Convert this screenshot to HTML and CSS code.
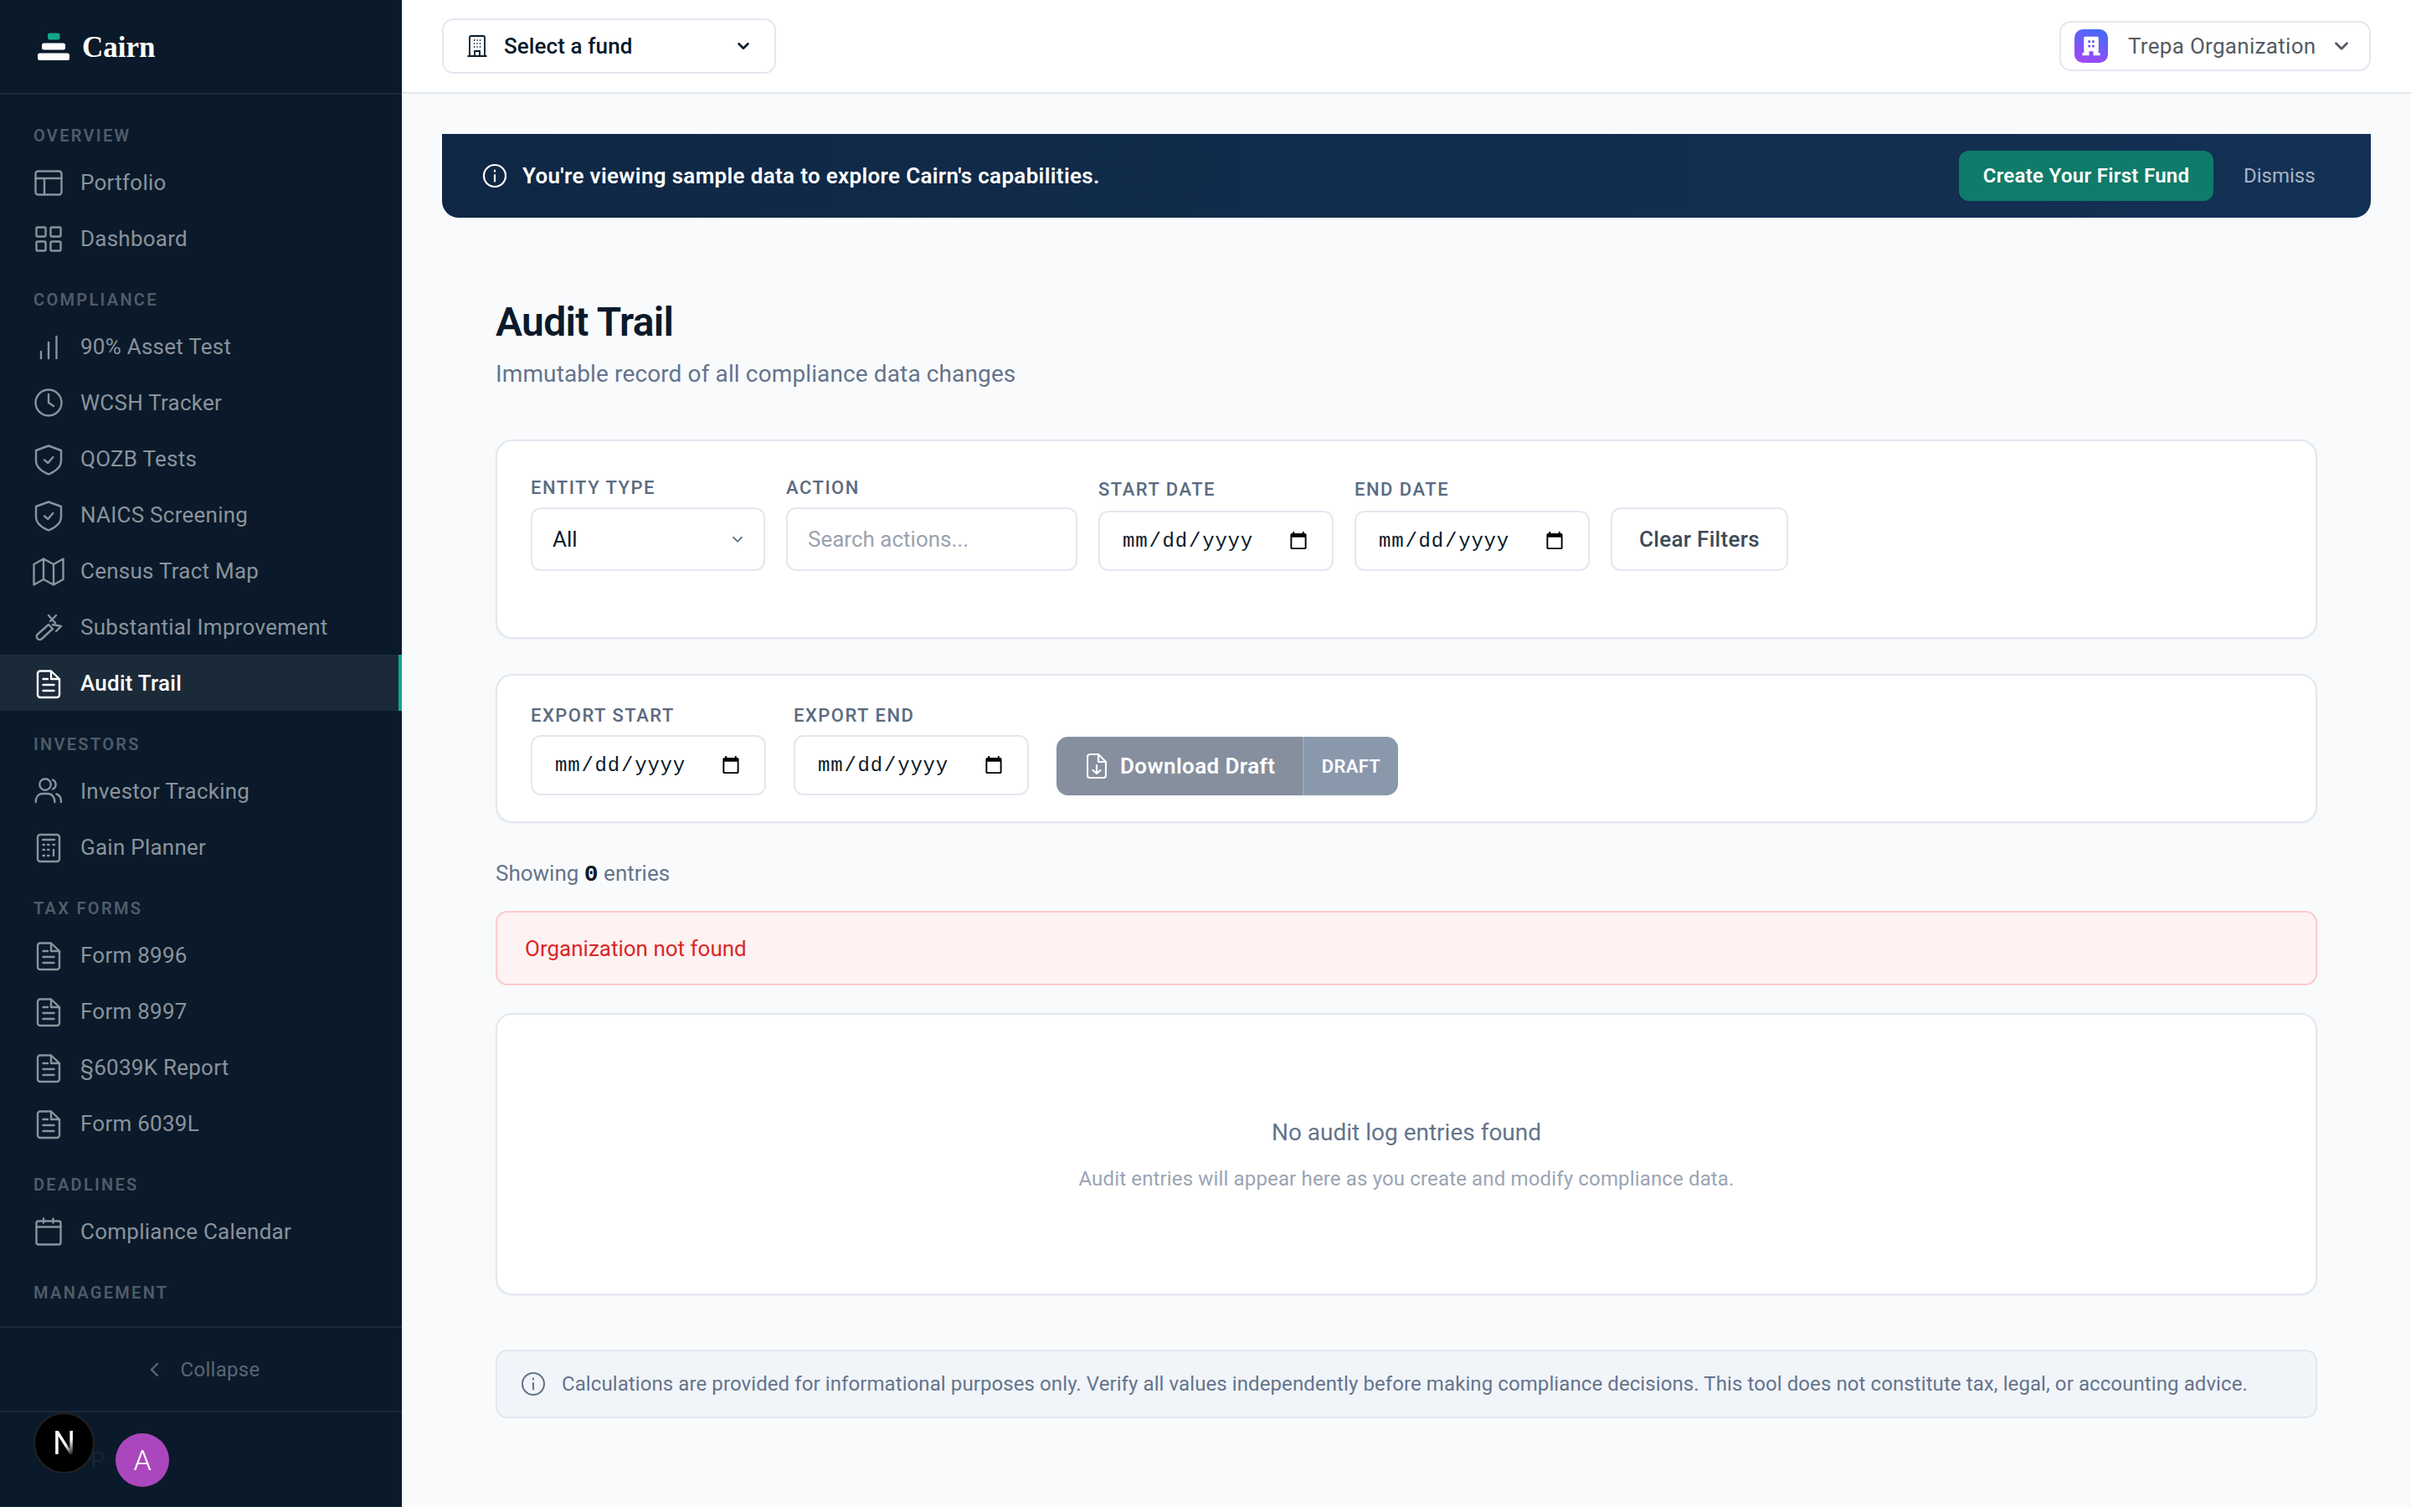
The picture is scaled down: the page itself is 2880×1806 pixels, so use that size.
FILE: index.html
```html
<!DOCTYPE html>
<html lang="en">
<head>
<meta charset="utf-8">
<title>Audit Trail</title>
<link rel="stylesheet" href="styles.css">
</head>
<body>
<svg class="defs" aria-hidden="true">
  <symbol id="i-portfolio" viewBox="0 0 40 40"><rect x="4.5" y="6.5" width="31" height="28" rx="3"/><path d="M4.5 15h31M15 15v19.500"/></symbol>
  <symbol id="i-dash" viewBox="0 0 40 40"><rect x="5.500" y="6.500" width="11" height="11" rx="1.500"/><rect x="22.500" y="6.500" width="12" height="11" rx="1.500"/><rect x="5.500" y="23.500" width="11" height="11" rx="1.500"/><rect x="22.500" y="23.500" width="12" height="11" rx="1.500"/></symbol>
  <symbol id="i-bars" viewBox="0 0 40 40"><path d="M11 34v-8M20 34V15M29.500 34V8"/></symbol>
  <symbol id="i-clock" viewBox="0 0 40 40"><circle cx="20" cy="20" r="15.500"/><path d="M20 10v10l6 4"/></symbol>
  <symbol id="i-shield" viewBox="0 0 40 40"><path d="M20 4.500 35 10v12c0 8-6.500 13-15 16.500C11.500 35 5 30 5 22V10Z"/><path d="m15 21.300 4.300 3.700 6-7"/></symbol>
  <symbol id="i-map" viewBox="0 0 40 40"><path d="M2.500 12 14 5.500 26 12l11.500-6.500V30L26 36.500 14 30 2.500 36.500ZM14 5.500V30M26 12v24.500"/></symbol>
  <symbol id="i-hammer" viewBox="0 0 40 40"><path d="M7 28.500 20 17l5 5-13 12a3.300 3.300 0 0 1-5-5.500ZM20 6l8 9M29 6l-7 7M25 17l10 2-6 6"/></symbol>
  <symbol id="i-doc" viewBox="0 0 40 40"><path d="M10 5.500h13L33 15v19a3 3 0 0 1-3 3H10a3 3 0 0 1-3-3V8.500a3 3 0 0 1 3-3ZM23 5.500V15h10M13.500 15H19M13.500 22h13M13.500 29h13"/></symbol>
  <symbol id="i-users" viewBox="0 0 40 40"><circle cx="16" cy="12" r="6.700"/><path d="M4.700 33c0-6 3.300-10 8.300-10h6c5 0 8.400 4 8.400 10M25 6.500a6 6 0 0 1 0 11M29.500 23.500c3.500 1 5.500 4.500 5.500 9.500"/></symbol>
  <symbol id="i-calc" viewBox="0 0 40 40"><rect x="7" y="5" width="26" height="32" rx="3"/><path d="M13 11h14M13.500 17h1.500M19 17h1.500M25.500 17h1.500M13.500 23h1.500M19 23h1.500M13.500 30h1.500M19 30h1.500M26 23v7"/></symbol>
  <symbol id="i-cal" viewBox="0 0 40 40"><rect x="5.500" y="7.500" width="29" height="28" rx="2.500"/><path d="M5.500 14.500h29M14 4.500v5M25.500 4.500v5"/></symbol>
  <symbol id="i-info" viewBox="0 0 30 30"><circle cx="15" cy="15" r="13"/><path d="M15 14v7.500M15 8.500v1.200"/></symbol>
  <symbol id="i-chev" viewBox="0 0 24 24"><path d="m6 9 6 6 6-6"/></symbol>
</svg>
<div class="app">
  <aside class="sidebar">
    <div class="brand">
      <svg class="brand-mark" viewBox="0 0 38 32"><rect class="mark-green" x="12" y="0" width="14.500" height="8" rx="2.500"/><rect class="mark-white" x="5" y="12" width="28" height="8" rx="2.500"/><rect class="mark-white" x="0" y="24" width="38" height="8.500" rx="2.500"/></svg>
      <span class="brand-name">Cairn</span>
    </div>
    <nav class="nav">
      <div class="nav-label">OVERVIEW</div>
      <a class="nav-item"><svg class="nav-icon"><use href="#i-portfolio"/></svg>Portfolio</a>
      <a class="nav-item"><svg class="nav-icon"><use href="#i-dash"/></svg>Dashboard</a>
      <div class="nav-label nav-gap">COMPLIANCE</div>
      <a class="nav-item"><svg class="nav-icon"><use href="#i-bars"/></svg>90% Asset Test</a>
      <a class="nav-item"><svg class="nav-icon"><use href="#i-clock"/></svg>WCSH Tracker</a>
      <a class="nav-item"><svg class="nav-icon"><use href="#i-shield"/></svg>QOZB Tests</a>
      <a class="nav-item"><svg class="nav-icon"><use href="#i-shield"/></svg>NAICS Screening</a>
      <a class="nav-item"><svg class="nav-icon"><use href="#i-map"/></svg>Census Tract Map</a>
      <a class="nav-item"><svg class="nav-icon"><use href="#i-hammer"/></svg>Substantial Improvement</a>
      <a class="nav-item is-active"><svg class="nav-icon"><use href="#i-doc"/></svg>Audit Trail</a>
      <div class="nav-label nav-gap">INVESTORS</div>
      <a class="nav-item"><svg class="nav-icon"><use href="#i-users"/></svg>Investor Tracking</a>
      <a class="nav-item"><svg class="nav-icon"><use href="#i-calc"/></svg>Gain Planner</a>
      <div class="nav-label nav-gap">TAX FORMS</div>
      <a class="nav-item"><svg class="nav-icon"><use href="#i-doc"/></svg>Form 8996</a>
      <a class="nav-item"><svg class="nav-icon"><use href="#i-doc"/></svg>Form 8997</a>
      <a class="nav-item"><svg class="nav-icon"><use href="#i-doc"/></svg>§6039K Report</a>
      <a class="nav-item"><svg class="nav-icon"><use href="#i-doc"/></svg>Form 6039L</a>
      <div class="nav-label nav-gap">DEADLINES</div>
      <a class="nav-item"><svg class="nav-icon"><use href="#i-cal"/></svg>Compliance Calendar</a>
      <div class="nav-label nav-gap">MANAGEMENT</div>
    </nav>
    <div class="collapse"><svg class="collapse-icon" viewBox="0 0 24 24"><path d="m15 5-7 7 7 7"/></svg>Collapse</div>
    <div class="user">
      <span class="user-name">Alex P</span>
      <span class="avatar">A</span>
      <span class="dev-badge"><span class="dev-n">N</span></span>
    </div>
  </aside>
  <div class="main">
    <header class="topbar">
      <button class="fund-select">
        <svg class="fund-icon" viewBox="0 0 24 26"><path d="M3 25V2.500A1.500 1.500 0 0 1 4.500 1h15A1.500 1.500 0 0 1 21 2.500V25M0.500 25h23M9 25v-6h6v6M8 6h1M15 6h1M8 10h1M15 10h1M8 14h1M15 14h1M11.500 6h1M11.500 10h1M11.500 14h1"/></svg>
        <span class="fund-text">Select a fund</span>
        <svg class="fund-chev"><use href="#i-chev"/></svg>
      </button>
      <button class="org-select">
        <span class="org-icon"><svg viewBox="0 0 24 24"><path d="M6 3h12a1 1 0 0 1 1 1v14.500h1.500V21H14v-4h-4v4H3.500v-2.500H5V4a1 1 0 0 1 1-1Zm3 3.500v2.200h2.200V6.500Zm3.800 0v2.200H15V6.500ZM9 11v2.200h2.200V11Zm3.800 0v2.200H15V11Z"/></svg></span>
        <span class="org-text">Trepa Organization</span>
        <svg class="org-chev"><use href="#i-chev"/></svg>
      </button>
    </header>
    <div class="banner">
      <svg class="banner-info"><use href="#i-info"/></svg>
      <span class="banner-text">You're viewing sample data to explore Cairn's capabilities.</span>
      <button class="banner-cta">Create Your First Fund</button>
      <button class="banner-dismiss">Dismiss</button>
    </div>
    <main class="page">
      <h1 class="title">Audit Trail</h1>
      <p class="subtitle">Immutable record of all compliance data changes</p>
      <section class="card filters">
        <div class="field w-entity">
          <label class="field-label">ENTITY TYPE</label>
          <div class="select-wrap">
            <select class="control select"><option>All</option></select>
            <svg class="select-chev"><use href="#i-chev"/></svg>
          </div>
        </div>
        <div class="field w-action">
          <label class="field-label">ACTION</label>
          <input class="control search" placeholder="Search actions...">
        </div>
        <div class="field w-date">
          <label class="field-label">START DATE</label>
          <input class="control date" type="date">
        </div>
        <div class="field w-date">
          <label class="field-label">END DATE</label>
          <input class="control date" type="date">
        </div>
        <button class="clear">Clear Filters</button>
      </section>
      <section class="card exports">
        <div class="field w-export">
          <label class="field-label">EXPORT START</label>
          <input class="control date" type="date">
        </div>
        <div class="field w-export">
          <label class="field-label">EXPORT END</label>
          <input class="control date" type="date">
        </div>
        <button class="download">
          <span class="download-main">
            <svg class="download-icon" viewBox="0 0 24 30"><path d="M4 1h10l9 9v16a3 3 0 0 1-3 3H4a3 3 0 0 1-3-3V4a3 3 0 0 1 3-3ZM14 1v9h9M12 14v10M7.500 20l4.500 4 4.500-4"/></svg>
            Download Draft
          </span>
          <span class="download-tag">DRAFT</span>
        </button>
      </section>
      <p class="showing">Showing <span class="mono">0</span> entries</p>
      <div class="error">Organization not found</div>
      <section class="card empty">
        <p class="empty-title">No audit log entries found</p>
        <p class="empty-sub">Audit entries will appear here as you create and modify compliance data.</p>
      </section>
      <div class="disclaimer">
        <svg class="disclaimer-icon"><use href="#i-info"/></svg>
        <span>Calculations are provided for informational purposes only. Verify all values independently before making compliance decisions. This tool does not constitute tax, legal, or accounting advice.</span>
      </div>
    </main>
  </div>
</div>
</body>
</html>
```
FILE: styles.css
```css
* { box-sizing: border-box; }
html, body { margin: 0; padding: 0; background: #fff; }
body { font-family: "Roboto", "Liberation Sans", sans-serif; color: #0a1a2a; overflow: hidden; }
button, input, select { font-family: inherit; }
p, h1 { margin: 0; }
.defs { position: absolute; width: 0; height: 0; }

.app { display: flex; height: 1800px; }

/* Sidebar */
.sidebar { width: 480px; flex: none; display: flex; flex-direction: column; background: #0a1a2a; position: relative; }
.brand { height: 113px; flex: none; display: flex; align-items: center; gap: 15px; padding: 0 0 0 45px; border-bottom: 2px solid #1a2a38; }
.brand-mark { width: 38px; height: 33px; }
.mark-green { fill: #14a58a; }
.mark-white { fill: #fff; }
.brand-name { font-family: "Liberation Serif", serif; font-weight: 700; font-size: 35px; padding-top: 2px; color: #fff; }

.nav { flex: 1; min-height: 0; overflow: hidden; padding-top: 26px; }
.nav-label { height: 45px; display: flex; align-items: center; padding-left: 40px; font-size: 20px; font-weight: 600; letter-spacing: 2.3px; color: #4f5c69; }
.nav-gap { margin-top: 17px; }
.nav-item { height: 67px; display: flex; align-items: center; gap: 18px; padding-left: 38px; font-size: 26px; letter-spacing: .25px; color: #8a939c; }
.nav-icon { width: 40px; height: 40px; flex: none; fill: none; stroke: currentColor; stroke-width: 2.4; stroke-linecap: round; stroke-linejoin: round; }
.is-active { background: #1b2a38; color: #fff; font-weight: 500; border-right: 4px solid #14a58a; }

.collapse { height: 103px; flex: none; display: flex; align-items: center; justify-content: center; gap: 18px; padding-left: 4px; border-top: 2px solid #1a2a38; border-bottom: 2px solid #1a2a38; font-size: 24px; letter-spacing: .3px; color: #5a6672; }
.collapse-icon { width: 24px; height: 24px; fill: none; stroke: currentColor; stroke-width: 2.400; stroke-linecap: round; stroke-linejoin: round; }

.user { height: 113px; flex: none; display: flex; align-items: center; gap: 16px; padding: 0 0 0 52px; }
.user-name { font-size: 26px; color: #1a2530; width: 70px; white-space: nowrap; }
.avatar { width: 64px; height: 64px; border-radius: 50%; background: #ab47bc; color: #fff; display: flex; align-items: center; justify-content: center; font-size: 34px; font-weight: 300; }
.dev-badge { position: absolute; left: 40px; top: 1687px; width: 73px; height: 73px; border-radius: 50%; background: #000; border: 2px solid #222; display: flex; align-items: center; justify-content: center; font-size: 38px; font-weight: 400; }
.dev-n { background: linear-gradient(135deg, #fff 55%, rgba(255, 255, 255, 0) 85%); -webkit-background-clip: text; background-clip: text; color: transparent; }

/* Main */
.main { flex: 1; min-width: 0; display: flex; flex-direction: column; background: #f9fafc; }
.topbar { height: 112px; flex: none; display: flex; align-items: center; justify-content: space-between; padding: 0 48px; background: #fff; border-bottom: 2px solid #e2e8f0; }
.fund-select { width: 399px; height: 66px; display: flex; align-items: center; padding: 0 26px 0 28px; background: #fff; border: 2px solid #e2e8f0; border-radius: 14px; font-size: 26px; font-weight: 500; letter-spacing: .1px; color: #0a1a2a; }
.fund-icon { width: 24px; height: 26px; flex: none; fill: none; stroke: currentColor; stroke-width: 1.800; }
.fund-text { flex: 1; text-align: left; padding-left: 20px; }
.fund-chev { width: 22px; height: 22px; fill: none; stroke: currentColor; stroke-width: 2.800; stroke-linecap: round; stroke-linejoin: round; }
.org-select { width: 372px; height: 60px; display: flex; align-items: center; padding: 0 20px 0 16px; background: #fff; border: 2px solid #e2e8f0; border-radius: 14px; font-size: 26px; letter-spacing: .3px; color: #555b63; }
.org-icon { width: 40px; height: 40px; flex: none; border-radius: 10px; background: linear-gradient(200deg, #3b6ff6, #a845f5); display: flex; align-items: center; justify-content: center; }
.org-icon svg { width: 30px; height: 30px; fill: #fff; fill-rule: evenodd; }
.org-text { flex: 1; text-align: left; padding-left: 24px; white-space: nowrap; }
.org-chev { width: 26px; height: 26px; fill: none; stroke: currentColor; stroke-width: 2.500; stroke-linecap: round; stroke-linejoin: round; }

.banner { height: 100px; flex: none; margin: 48px 48px 0; display: flex; align-items: center; padding: 0 48px 0 48px; border-radius: 0 0 20px 20px; background: linear-gradient(90deg, #0f2744, #133155); color: #fff; }
.banner-info { width: 30px; height: 30px; flex: none; fill: none; stroke: currentColor; stroke-width: 2.200; stroke-linecap: round; }
.banner-text { flex: 1; padding-left: 18px; font-size: 26px; font-weight: 600; letter-spacing: .33px; }
.banner-cta { width: 304px; height: 60px; border: 0; border-radius: 12px; background: #0f7b6a; color: #fff; font-size: 24px; font-weight: 600; letter-spacing: .3px; }
.banner-dismiss { width: 84px; margin: 0 20px 0 36px; padding: 0; border: 0; background: none; color: #a8b5c4; font-size: 24px; text-align: left; }

.page { padding: 92px 112px 0; }
.title { height: 62px; line-height: 65px; font-size: 48px; font-weight: 600; letter-spacing: -.7px; color: #0a1a2a; }
.subtitle { height: 40px; margin-top: 13px; line-height: 40px; font-size: 28px; letter-spacing: .12px; color: #64748b; }

.card { background: #fff; border: 2px solid #e2e8f0; border-radius: 20px; box-shadow: 0 1px 3px rgba(15, 23, 42, .05); }
.filters { display: flex; align-items: flex-end; gap: 25px; height: 238px; margin-top: 58px; padding: 39px 40px 79px; }
.exports { display: flex; align-items: flex-end; gap: 33px; height: 178px; margin-top: 42px; padding: 0 40px 31px; }
.field { display: flex; flex-direction: column; }
.w-entity { width: 280px; }
.w-action { width: 348px; }
.w-date { width: 281px; }
.w-export { width: 281px; }
.field-label { height: 30px; margin-bottom: 8px; line-height: 30px; font-size: 22px; font-weight: 500; letter-spacing: 1.5px; color: #5b6b80; }
.w-date .field-label { margin-bottom: 10px; }
.control { width: 100%; background: #fff; border: 2px solid #e2e8f0; border-radius: 12px; outline: 0; color: #0a1a2a; }
.select-wrap { position: relative; }
.select { height: 76px; padding: 0 24px; appearance: none; font-size: 26px; }
.select-chev { position: absolute; right: 22px; top: 27px; width: 22px; height: 22px; fill: none; stroke: #64748b; stroke-width: 2; pointer-events: none; }
.search { height: 76px; padding: 0 24px; font-size: 26px; }
.search::placeholder { color: #9aa3af; opacity: 1; }
.date { height: 72px; padding: 0 26px; font-family: "Liberation Mono", monospace; font-size: 24px; letter-spacing: .8px; }
.clear { width: 212px; height: 76px; background: #fff; border: 2px solid #e2e8f0; border-radius: 12px; font-size: 26px; font-weight: 500; letter-spacing: .3px; color: #3c4a5a; }
.download { height: 70px; width: 408px; padding: 0; display: flex; border: 0; border-radius: 14px; overflow: hidden; color: #fff; }
.download-main { width: 296px; height: 100%; display: flex; align-items: center; gap: 16px; padding-left: 36px; background: #858f9e; font-size: 26px; font-weight: 600; letter-spacing: .4px; border-right: 2px solid #9aa7b7; }
.download-icon { width: 24px; height: 30px; fill: none; stroke: currentColor; stroke-width: 2.200; stroke-linecap: round; stroke-linejoin: round; }
.download-tag { flex: 1; height: 100%; display: flex; align-items: center; justify-content: center; background: #8a98ac; font-size: 22px; font-weight: 600; letter-spacing: .3px; }

.showing { height: 40px; margin-top: 40px; line-height: 40px; font-size: 26px; color: #64748b; }
.mono { font-family: "Liberation Mono", monospace; color: #0a1a2a; font-weight: 700; font-size: 28px; }
.error { height: 89px; margin-top: 25px; display: flex; align-items: center; padding-left: 33px; background: #fef2f2; border: 2px solid #fecaca; border-radius: 14px; font-size: 26px; color: #dc2626; }
.empty { height: 337px; margin-top: 33px; padding-top: 3px; display: flex; flex-direction: column; align-items: center; justify-content: center; gap: 15px; }
.empty-title { line-height: 40px; font-size: 28px; color: #64748b; }
.empty-sub { line-height: 40px; font-size: 24px; letter-spacing: .15px; color: #9aa5b4; }
.disclaimer { height: 82px; margin-top: 65px; display: flex; align-items: center; gap: 19px; padding-left: 28px; background: #f1f4f9; border: 2px solid #e2e8f0; border-radius: 14px; font-size: 24px; letter-spacing: .09px; color: #64748b; }
.disclaimer-icon { width: 30px; height: 30px; flex: none; fill: none; stroke: currentColor; stroke-width: 2; stroke-linecap: round; }
```
